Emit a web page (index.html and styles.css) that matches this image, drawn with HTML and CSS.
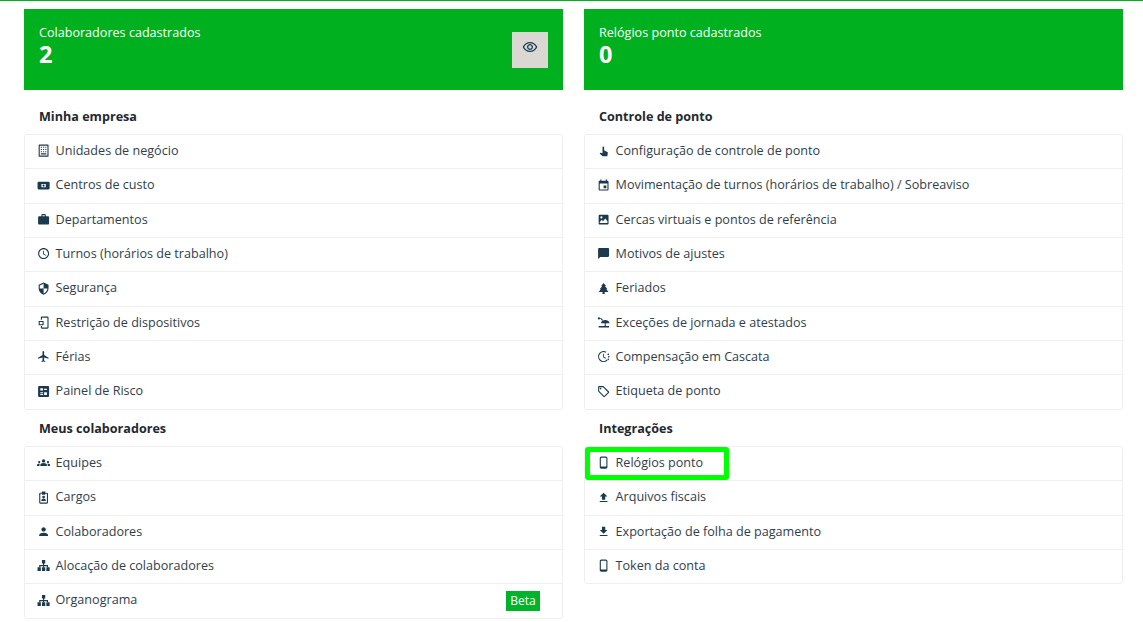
FILE: index.html
```html
<!DOCTYPE html>
<html lang="pt-BR">
<head>
<meta charset="utf-8">
<title>Configurações</title>
<link rel="stylesheet" href="styles.css">
</head>
<body>
<svg class="defs" width="0" height="0" aria-hidden="true">
<symbol id="i-building" viewBox="0 0 24 24"><path fill-rule="evenodd" d="M4 1h16a1 1 0 0 1 1 1v20a1 1 0 0 1-1 1H4a1 1 0 0 1-1-1V2a1 1 0 0 1 1-1zm1 2v18h14V3z"/><path d="M7 5h2v2H7zm4 0h2v2h-2zm4 0h2v2h-2zM7 9h2v2H7zm4 0h2v2h-2zm4 0h2v2h-2zM7 13h2v2H7zm4 0h2v2h-2zm4 0h2v2h-2zM7 17h10v2H7z"/></symbol>
<symbol id="i-money" viewBox="0 0 24 24"><path fill-rule="evenodd" d="M3 5h18a2 2 0 0 1 2 2v10a2 2 0 0 1-2 2H3a2 2 0 0 1-2-2V7a2 2 0 0 1 2-2zm5 4v6h8V9zm4 1a2 2 0 1 1 0 4 2 2 0 0 1 0-4z"/></symbol>
<symbol id="i-work" viewBox="0 0 24 24"><path d="M20 6h-4V4c0-1.110-.89-2-2-2h-4c-1.110 0-2 .89-2 2v2H4c-1.110 0-1.990.89-1.990 2L2 19c0 1.110.89 2 2 2h16c1.110 0 2-.89 2-2V8c0-1.110-.89-2-2-2zm-6 0h-4V4h4v2z"/></symbol>
<symbol id="i-clock" viewBox="0 0 24 24"><path d="M11.990 2C6.470 2 2 6.480 2 12s4.470 10 9.990 10C17.520 22 22 17.520 22 12S17.520 2 11.990 2zM12 20c-4.420 0-8-3.580-8-8s3.580-8 8-8 8 3.580 8 8-3.580 8-8 8zm.5-13H11v6l5.250 3.150.75-1.230-4.500-2.670z"/></symbol>
<symbol id="i-shield" viewBox="0 0 24 24"><path d="M12 1L3 5v6c0 5.550 3.840 10.740 9 12 5.160-1.260 9-6.450 9-12V5l-9-4zm0 10.990h7c-.53 4.120-3.280 7.790-7 8.940V12H5V6.300l7-3.110v8.800z"/></symbol>
<symbol id="i-restrict" viewBox="0 0 24 24"><path d="M9 1h10c1.100 0 2 .9 2 2v18c0 1.100-.9 2-2 2H9c-1.100 0-2-.9-2-2v-3h2v3h10V3H9v4H7V3c0-1.100.9-2 2-2z"/><path fill-rule="evenodd" d="M3 9h9v8H3zm2 2v4h5v-4z"/></symbol>
<symbol id="i-flight" viewBox="0 0 24 24"><path d="M21 16v-2l-8-5V3.500c0-.83-.67-1.500-1.500-1.500S10 2.670 10 3.500V9l-8 5v2l8-2.500V19l-2 1.500V22l3.500-1 3.500 1v-1.500L13 19v-5.500l8 2.500z"/></symbol>
<symbol id="i-panel" viewBox="0 0 24 24"><path fill-rule="evenodd" d="M4 2h16a2 2 0 0 1 2 2v16a2 2 0 0 1-2 2H4a2 2 0 0 1-2-2V4a2 2 0 0 1 2-2zm2 4v4h5V6zm7 1v2h5V7zM6 13v2h5v-2zm0 3.500v1.500h5v-1.500zM13 13v5h5v-5z"/></symbol>
<symbol id="i-groups" viewBox="0 0 24 24"><path d="M12 12.750c1.630 0 3.070.39 4.240.9 1.080.48 1.760 1.560 1.760 2.730V18H6v-1.610c0-1.180.68-2.260 1.760-2.730 1.170-.52 2.610-.91 4.240-.91zM4 13c1.100 0 2-.9 2-2s-.9-2-2-2-2 .9-2 2 .9 2 2 2zm1.130 1.100c-.37-.06-.74-.1-1.130-.1-.99 0-1.930.21-2.780.58C.48 14.900 0 15.620 0 16.430V18h4.500v-1.610c0-.83.23-1.610.63-2.290zM20 13c1.100 0 2-.9 2-2s-.9-2-2-2-2 .9-2 2 .9 2 2 2zm4 3.430c0-.81-.48-1.530-1.220-1.850-.85-.37-1.790-.58-2.780-.58-.39 0-.76.04-1.130.1.4.68.63 1.460.63 2.290V18H24v-1.570zM12 6c1.660 0 3 1.340 3 3s-1.340 3-3 3-3-1.340-3-3 1.340-3 3-3z"/></symbol>
<symbol id="i-badge" viewBox="0 0 24 24"><path fill-rule="evenodd" d="M6 3h3V1h6v2h3a2 2 0 0 1 2 2v16a2 2 0 0 1-2 2H6a2 2 0 0 1-2-2V5a2 2 0 0 1 2-2zm0 2v16h12V5h-3v2H9V5z"/><circle cx="12" cy="11" r="2.500"/><path d="M8 16.500c0-1.500 2.500-2.200 4-2.200s4 .7 4 2.200V18H8z"/></symbol>
<symbol id="i-person" viewBox="0 0 24 24"><path d="M12 12c2.210 0 4-1.790 4-4s-1.790-4-4-4-4 1.790-4 4 1.790 4 4 4zm0 2c-2.670 0-8 1.340-8 4v2h16v-2c0-2.660-5.330-4-8-4z"/></symbol>
<symbol id="i-tree" viewBox="0 0 24 24"><path d="M9 2h6v6h-2v3h7v4h-2v-2h-5v2h-2v-2H6v2H4v-4h7V8H9z"/><path d="M1 15h6v7H1zm8 0h6v7H9zm8 0h6v7h-6z"/></symbol>
<symbol id="i-touch" viewBox="0 0 24 24"><path d="M18.840 15.870l-4.540-2.260c-.17-.07-.35-.11-.54-.11H13v-6c0-.83-.67-1.500-1.500-1.500S10 6.670 10 7.500v10.740l-3.430-.72c-.08-.01-.15-.03-.24-.03-.31 0-.59.13-.79.33l-.79.8 4.940 4.940c.27.27.65.44 1.060.44h6.790c.75 0 1.330-.55 1.440-1.280l.75-5.270c.01-.07.02-.14.02-.2 0-.62-.38-1.160-.91-1.380z" transform="translate(0 -1.500)"/></symbol>
<symbol id="i-event" viewBox="0 0 24 24"><path d="M17 12h-5v5h5v-5zM16 1v2H8V1H6v2H5c-1.110 0-1.990.9-1.990 2L3 19c0 1.100.89 2 2 2h14c1.100 0 2-.9 2-2V5c0-1.100-.9-2-2-2h-1V1h-2zm3 18H5V8h14v11z"/></symbol>
<symbol id="i-photo" viewBox="0 0 24 24"><path fill-rule="evenodd" d="M5 3h14c1.100 0 2 .9 2 2v14c0 1.100-.9 2-2 2H5c-1.100 0-2-.9-2-2V5c0-1.100.9-2 2-2zm3 3a2 2 0 1 0 0 4 2 2 0 0 0 0-4zm7 4l-4 5-2.500-2.500L5 17v1h14v-3z"/></symbol>
<symbol id="i-chat" viewBox="0 0 24 24"><path d="M20 2H4c-1.100 0-2 .9-2 2v18l4-4h14c1.100 0 2-.9 2-2V4c0-1.100-.9-2-2-2z"/></symbol>
<symbol id="i-park" viewBox="0 0 24 24"><path d="M12 2l4.500 5.500h-2l4.500 5.500h-2l4 5h-7v4h-4v-4H3l4-5H5l4.500-5.500h-2z"/></symbol>
<symbol id="i-beach" viewBox="0 0 24 24"><circle cx="3.500" cy="4.500" r="2"/><path d="M7 3l4 4.500-1.500 1.300L5.500 4.300zM7 13c1-3.500 4.500-5.500 8-5.500s7 2 8 5.500H16v5h-2v-5zM3 18h19v3H3z"/></symbol>
<symbol id="i-cascade" viewBox="0 0 24 24"><path d="M12 2c1.800 0 3.500.5 5 1.300l-1 1.800A8 8 0 1 0 17.800 17.500l1.500 1.300A10 10 0 1 1 12 2zm-1 5h1.500v5.200l4 2.400-.8 1.300L11 13z"/><circle cx="20.500" cy="8" r="1.500"/><circle cx="21.500" cy="12.500" r="1.500"/><circle cx="20.500" cy="17" r="1.500"/></symbol>
<symbol id="i-label" viewBox="0 0 24 24"><path d="M21.410 11.580l-9-9C12.050 2.220 11.550 2 11 2H4c-1.100 0-2 .9-2 2v7c0 .55.22 1.050.59 1.420l9 9c.36.36.86.58 1.410.58s1.050-.22 1.410-.59l7-7c.37-.36.59-.86.59-1.410s-.23-1.060-.59-1.420zM13 20.010L4 11V4h7v-.01l9 9-7 7.020z"/><circle cx="6.500" cy="6.500" r="1.500"/></symbol>
<symbol id="i-phone" viewBox="0 0 24 24"><path d="M8 1h8c1.700 0 3 1.300 3 3v16c0 1.700-1.300 3-3 3H8c-1.700 0-3-1.300-3-3V4c0-1.700 1.300-3 3-3zm0 2c-.6 0-1 .4-1 1v15h10V4c0-.6-.4-1-1-1z"/></symbol>
<symbol id="i-upload" viewBox="0 0 24 24"><path d="M9 16h6v-6h4l-7-7-7 7h4zm-4 2h14v2H5z"/></symbol>
<symbol id="i-download" viewBox="0 0 24 24"><path d="M19 9h-4V3H9v6H5l7 7 7-7zM5 18v2h14v-2H5z"/></symbol>
<symbol id="i-eye" viewBox="0 0 24 24"><path d="M12 6.500c3.790 0 7.170 2.130 8.820 5.500-1.650 3.370-5.020 5.500-8.820 5.500S4.830 15.370 3.180 12C4.830 8.630 8.210 6.500 12 6.500m0-2C7 4.500 2.730 7.610 1 12c1.730 4.390 6 7.500 11 7.500s9.270-3.110 11-7.500c-1.730-4.390-6-7.500-11-7.500zm0 5c1.380 0 2.500 1.120 2.500 2.500s-1.120 2.500-2.500 2.500-2.500-1.120-2.500-2.500 1.120-2.500 2.500-2.500m0-2c-2.480 0-4.500 2.020-4.500 4.500s2.020 4.500 4.500 4.500 4.500-2.020 4.500-4.500-2.020-4.500-4.500-4.500z"/></symbol>
</svg>
<div class="topbar"></div>
<main class="grid">
  <section class="column">
    <div class="stat">
      <div class="stat-text"><div class="stat-label">Colaboradores cadastrados</div><div class="stat-value">2</div></div>
      <button class="eye" type="button" aria-label="Ver"><svg class="eye-icon"><use href="#i-eye"/></svg></button>
    </div>
    <h2 class="heading">Minha empresa</h2>
    <ul class="list">
      <li class="row"><svg class="icon"><use href="#i-building"/></svg>Unidades de negócio</li>
      <li class="row"><svg class="icon"><use href="#i-money"/></svg>Centros de custo</li>
      <li class="row"><svg class="icon"><use href="#i-work"/></svg>Departamentos</li>
      <li class="row"><svg class="icon"><use href="#i-clock"/></svg>Turnos (horários de trabalho)</li>
      <li class="row"><svg class="icon"><use href="#i-shield"/></svg>Segurança</li>
      <li class="row"><svg class="icon"><use href="#i-restrict"/></svg>Restrição de dispositivos</li>
      <li class="row"><svg class="icon"><use href="#i-flight"/></svg>Férias</li>
      <li class="row"><svg class="icon"><use href="#i-panel"/></svg>Painel de Risco</li>
    </ul>
    <h2 class="heading heading-next">Meus colaboradores</h2>
    <ul class="list">
      <li class="row"><svg class="icon"><use href="#i-groups"/></svg>Equipes</li>
      <li class="row"><svg class="icon"><use href="#i-badge"/></svg>Cargos</li>
      <li class="row"><svg class="icon"><use href="#i-person"/></svg>Colaboradores</li>
      <li class="row"><svg class="icon"><use href="#i-tree"/></svg>Alocação de colaboradores</li>
      <li class="row"><svg class="icon"><use href="#i-tree"/></svg>Organograma<span class="beta">Beta</span></li>
    </ul>
  </section>
  <section class="column">
    <div class="stat">
      <div class="stat-text"><div class="stat-label">Relógios ponto cadastrados</div><div class="stat-value">0</div></div>
    </div>
    <h2 class="heading">Controle de ponto</h2>
    <ul class="list">
      <li class="row"><svg class="icon"><use href="#i-touch"/></svg>Configuração de controle de ponto</li>
      <li class="row"><svg class="icon"><use href="#i-event"/></svg>Movimentação de turnos (horários de trabalho) / Sobreaviso</li>
      <li class="row"><svg class="icon"><use href="#i-photo"/></svg>Cercas virtuais e pontos de referência</li>
      <li class="row"><svg class="icon"><use href="#i-chat"/></svg>Motivos de ajustes</li>
      <li class="row"><svg class="icon"><use href="#i-park"/></svg>Feriados</li>
      <li class="row"><svg class="icon"><use href="#i-beach"/></svg>Exceções de jornada e atestados</li>
      <li class="row"><svg class="icon"><use href="#i-cascade"/></svg>Compensação em Cascata</li>
      <li class="row"><svg class="icon"><use href="#i-label"/></svg>Etiqueta de ponto</li>
    </ul>
    <h2 class="heading heading-next">Integrações</h2>
    <ul class="list">
      <li class="row"><span class="highlight"></span><svg class="icon"><use href="#i-phone"/></svg>Relógios ponto</li>
      <li class="row"><svg class="icon"><use href="#i-upload"/></svg>Arquivos fiscais</li>
      <li class="row"><svg class="icon"><use href="#i-download"/></svg>Exportação de folha de pagamento</li>
      <li class="row"><svg class="icon"><use href="#i-phone"/></svg>Token da conta</li>
    </ul>
  </section>
</main>
</body>
</html>
```

FILE: styles.css
```css
* { box-sizing: border-box; }
html, body { margin: 0; padding: 0; height: 622px; overflow: hidden; background: #fff; }
body { font-family: "Open Sans", sans-serif; font-size: 12.6px; color: #2f3e4c; }
.defs { position: absolute; }
.topbar { height: 1px; background: #00b01e; }
.grid { display: grid; grid-template-columns: 539px 539px; column-gap: 21px; padding: 8px 20px 0 24px; }
.column { display: flex; flex-direction: column; min-width: 0; }
.stat { height: 81px; background: #00b01e; color: #fff; display: flex; align-items: flex-start; justify-content: space-between; padding: 15px 15px 0; }
.stat-label { font-size: 12.6px; line-height: 18px; }
.stat-value { font-size: 23.5px; font-weight: 700; line-height: 25px; }
.eye { width: 36px; height: 36px; margin-top: 8px; border: 0; padding: 0; background: #dbd8d3; display: flex; align-items: flex-start; justify-content: center; padding-top: 7px; }
.eye-icon { width: 16px; height: 16px; fill: #1d3f57; }
.heading { margin: 0; font-size: 12.6px; font-weight: 700; line-height: 18px; color: #22292f; padding: 18px 15px 9px; height: 44px; }
.heading-next { padding-top: 10.5px; height: 36.36px; }
.list { list-style: none; margin: 0; padding: 0; border: 1px solid #efefef; border-radius: 3px; }
.row { position: relative; height: 34.33px; display: flex; align-items: center; padding: 0 22px 1.33px 12.3px; border-bottom: 1px solid #efefef; line-height: 18px; }
.row:last-child { border-bottom: 0; height: 33.33px; }
.icon { width: 13.2px; height: 13.2px; margin-right: 5.1px; flex: none; fill: #1c3a4e; }
.beta { position: absolute; right: 22px; top: 7px; width: 34px; height: 20px; background: #00b32a; color: #fff; font-size: 12px; line-height: 20px; text-align: center; }
.highlight { position: absolute; left: 0; top: 0; width: 144px; height: 33px; border: 5px solid #00ff00; border-radius: 3px; }
```
